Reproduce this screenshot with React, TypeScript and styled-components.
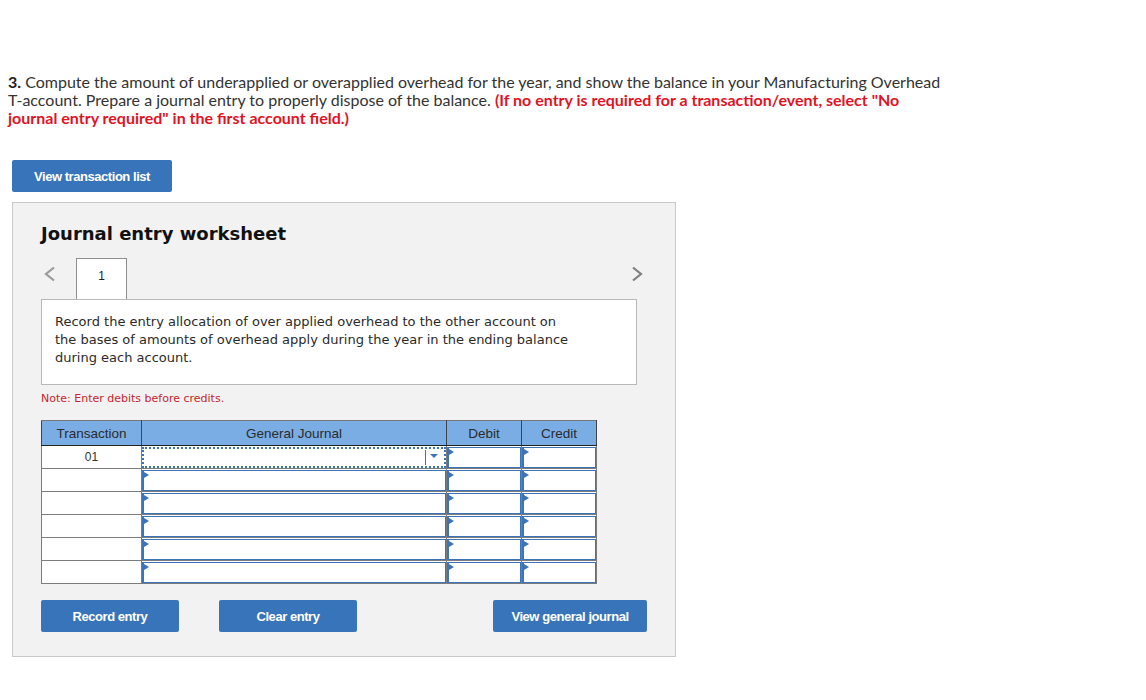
import React from "react";
import styled, { createGlobalStyle } from "styled-components";

const GlobalStyle = createGlobalStyle`
  html, body {
    margin: 0;
    padding: 0;
    background: #ffffff;
  }
  body {
    font-family: "Liberation Sans", Arial, sans-serif;
  }
`;

const Page = styled.div`
  padding: 73px 8px 40px 12px;
`;

const Question = styled.p`
  margin: 0 0 0 -4px;
  width: 936px;
  font-family: Lato, "Open Sans", sans-serif;
  font-size: 16px;
  line-height: 18px;
  color: #333333;
  b {
    font-weight: 700;
    color: #222;
  }
`;

const Hint = styled.strong`
  color: #e3121f;
  font-weight: 700;
`;

const BlueButton = styled.button<{ $width: number }>`
  width: ${(p) => p.$width}px;
  height: 32px;
  border: none;
  border-radius: 2px;
  background: #3874b9;
  color: #ffffff;
  font-family: "Liberation Sans", Arial, sans-serif;
  font-size: 13px;
  font-weight: 700;
  letter-spacing: -0.45px;
  cursor: pointer;
  padding: 0;
`;

const TopActions = styled.div`
  margin-top: 33px;
`;

const Panel = styled.section`
  margin-top: 10px;
  width: 664px;
  border: 1px solid #c9c9c9;
  background: #f2f2f2;
  padding: 0 28px 24px 28px;
  box-sizing: border-box;
`;

const Heading = styled.h2`
  margin: 0;
  padding-top: 19px;
  font-family: "DejaVu Sans", Verdana, sans-serif;
  font-size: 18px;
  font-weight: 700;
  line-height: 24px;
  color: #111111;
`;

const TabRow = styled.div`
  display: flex;
  align-items: flex-start;
  margin-top: 12px;
  height: 41px;
`;

const Chevron = styled.button<{ $right?: boolean }>`
  width: 35px;
  height: 41px;
  border: none;
  background: transparent;
  display: flex;
  align-items: flex-start;
  justify-content: ${(p) => (p.$right ? "flex-end" : "flex-start")};
  padding: 8px ${(p) => (p.$right ? 4 : 0)}px 0 ${(p) => (p.$right ? 0 : 3)}px;
  margin-left: ${(p) => (p.$right ? "auto" : 0)};
  box-sizing: border-box;
  cursor: pointer;
`;

const Tab = styled.div`
  width: 51px;
  height: 41px;
  box-sizing: border-box;
  border: 1px solid #8f8f8f;
  border-bottom: none;
  background: #ffffff;
  font-family: "Liberation Sans", Arial, sans-serif;
  font-size: 12px;
  color: #222;
  display: flex;
  justify-content: center;
  padding-top: 10px;
  position: relative;
  z-index: 1;
  margin-bottom: -1px;
`;

const Description = styled.div`
  width: 596px;
  box-sizing: border-box;
  border: 1px solid #b8b8b8;
  background: #ffffff;
  padding: 13px 13px 17px 13px;
  font-family: "DejaVu Sans", Verdana, sans-serif;
  font-size: 13px;
  line-height: 18px;
  color: #2a2a2a;
  p {
    margin: 0;
    max-width: 522px;
  }
`;

const Note = styled.p`
  margin: 7px 0 0 0;
  font-family: "DejaVu Sans", Verdana, sans-serif;
  font-size: 11px;
  line-height: 14px;
  color: #c4262e;
`;

const Table = styled.table`
  margin-top: 14px;
  border-collapse: collapse;
  table-layout: fixed;
  border: 1px solid #777777;
  font-family: "Liberation Sans", Arial, sans-serif;
`;

const Th = styled.th<{ $w: number }>`
  width: ${(p) => p.$w}px;
  height: 24px;
  padding: 0;
  background: #7aade3;
  border: 1px solid #444;
  border-bottom: 1px solid #222;
  border-top-color: #777;
  font-size: 13.5px;
  font-weight: 400;
  color: #2b2b2b;
  text-align: center;
`;

const TxCell = styled.td`
  height: 22px;
  padding: 0;
  background: #ffffff;
  border: 1px solid #7c7c7c;
  font-size: 12px;
  color: #333;
  text-align: center;
`;

const InputCell = styled.td`
  height: 22px;
  padding: 0;
  border: 1px solid #7c7c7c;
  background: #ffffff;
`;

const Field = styled.div<{ $flag?: boolean; $dotted?: boolean }>`
  position: relative;
  height: 21px;
  box-sizing: border-box;
  background: #ffffff;
  border: ${(p) => (p.$dotted ? "2px dotted #3c74b9" : "1px solid #3c74b9")};
  border-left-width: 2px;
  &::before {
    content: "";
    display: ${(p) => (p.$flag ? "block" : "none")};
    position: absolute;
    left: 0;
    top: 1px;
    border-top: 3px solid transparent;
    border-bottom: 3px solid transparent;
    border-left: 5px solid #3c74b9;
  }
`;

const Dropdown = styled.span`
  position: absolute;
  right: 2px;
  top: 1px;
  bottom: 1px;
  width: 16px;
  border-left: 1px solid #3c74b9;
  display: flex;
  align-items: center;
  justify-content: center;
  &::after {
    content: "";
    border-left: 4px solid transparent;
    border-right: 4px solid transparent;
    border-top: 4px solid #3c74b9;
    margin-top: -2px;
  }
`;

const BottomActions = styled.div`
  display: flex;
  align-items: center;
  gap: 40px;
  margin-top: 16px;
  & > :last-child {
    margin-left: auto;
  }
`;

const ChevronIcon = ({ right }: { right?: boolean }) => (
  <svg width="12" height="16" viewBox="0 0 12 16">
    <polyline
      points={right ? "2,1.5 10,8 2,14.5" : "10,1.5 2,8 10,14.5"}
      fill="none"
      stroke={right ? "#7f7f7f" : "#9a9a9a"}
      strokeWidth="2.2"
    />
  </svg>
);

const rows = [0, 1, 2, 3, 4, 5];

export default function App() {
  return (
    <>
      <GlobalStyle />
      <Page>
        <Question>
          <b>3.</b> Compute the amount of underapplied or overapplied overhead for the year, and show
          the balance in your Manufacturing Overhead T-account. Prepare a journal entry to properly
          dispose of the balance.{" "}
          <Hint>
            (If no entry is required for a transaction/event, select "No journal entry required" in
            the first account field.)
          </Hint>
        </Question>

        <TopActions>
          <BlueButton $width={160}>View transaction list</BlueButton>
        </TopActions>

        <Panel>
          <Heading>Journal entry worksheet</Heading>

          <TabRow>
            <Chevron aria-label="previous">
              <ChevronIcon />
            </Chevron>
            <Tab>1</Tab>
            <Chevron $right aria-label="next">
              <ChevronIcon right />
            </Chevron>
          </TabRow>

          <Description>
            <p>
              Record the entry allocation of over applied overhead to the other account on the bases
              of amounts of overhead apply during the year in the ending balance during each account.
            </p>
          </Description>

          <Note>Note: Enter debits before credits.</Note>

          <Table>
            <thead>
              <tr>
                <Th $w={99}>Transaction</Th>
                <Th $w={304}>General Journal</Th>
                <Th $w={74}>Debit</Th>
                <Th $w={74}>Credit</Th>
              </tr>
            </thead>
            <tbody>
              {rows.map((r) => (
                <tr key={r}>
                  <TxCell>{r === 0 ? "01" : ""}</TxCell>
                  <InputCell>
                    {r === 0 ? (
                      <Field $dotted>
                        <Dropdown />
                      </Field>
                    ) : (
                      <Field $flag />
                    )}
                  </InputCell>
                  <InputCell>
                    <Field $flag />
                  </InputCell>
                  <InputCell>
                    <Field $flag />
                  </InputCell>
                </tr>
              ))}
            </tbody>
          </Table>

          <BottomActions>
            <BlueButton $width={138}>Record entry</BlueButton>
            <BlueButton $width={138}>Clear entry</BlueButton>
            <BlueButton $width={154}>View general journal</BlueButton>
          </BottomActions>
        </Panel>
      </Page>
    </>
  );
}
